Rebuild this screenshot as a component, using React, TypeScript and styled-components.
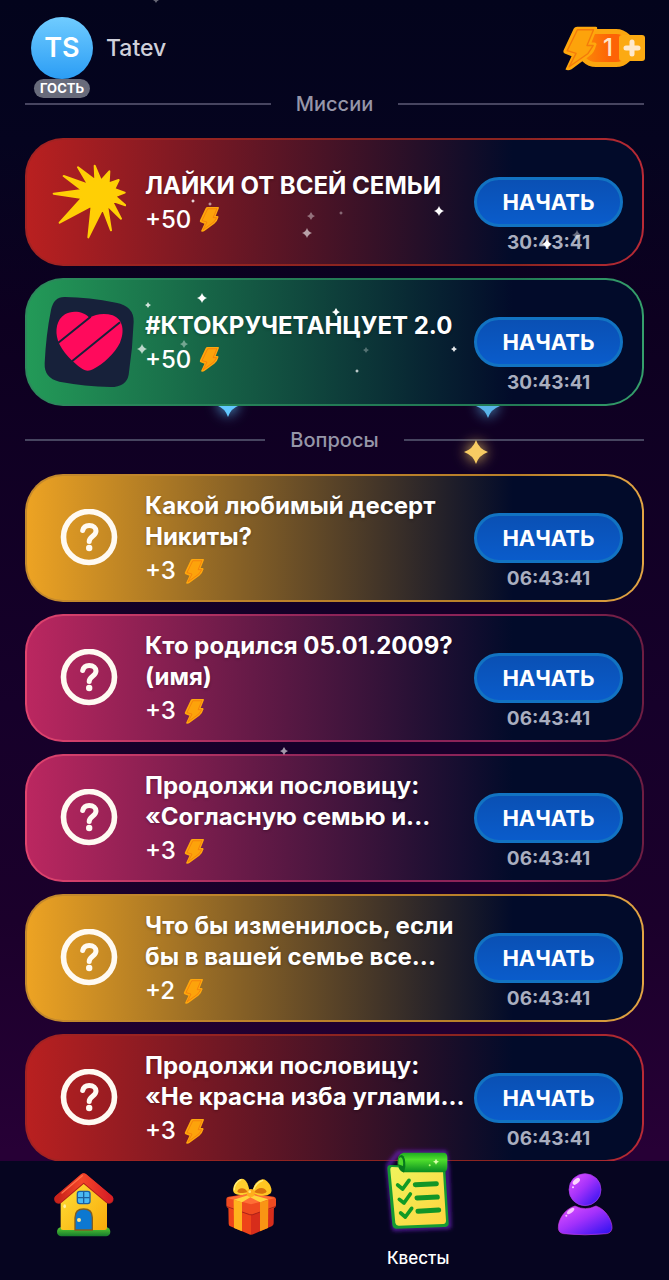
import React, { useId } from "react";
import styled, { createGlobalStyle } from "styled-components";

const GlobalStyle = createGlobalStyle`
  *, *::before, *::after { box-sizing: border-box; }
  body {
    margin: 0;
    background: #05051c;
    font-family: Inter, "Noto Sans", sans-serif;
    color: #fff;
  }
`;

type Tone = "red" | "green" | "gold" | "pink";

const tones: Record<Tone, { fill: string; edge: string; edgeMid: string; corner: string }> = {
  red: { fill: "#b92020", edge: "#a32222", edgeMid: "#8c2420", corner: "#b92a36" },
  green: { fill: "#239a58", edge: "#2c8a5c", edgeMid: "#237a55", corner: "#35a06c" },
  gold: { fill: "#eda323", edge: "#c58a2c", edgeMid: "#b9802a", corner: "#e3a544" },
  pink: { fill: "#bb2760", edge: "#e0446e", edgeMid: "#8c2358", corner: "#6e1d42" },
};

const Page = styled.div`
  position: relative;
  display: flex;
  flex-direction: column;
  min-height: 100vh;
  overflow: clip;
  background: linear-gradient(180deg, #03041c 0%, #05041f 11%, #0d0020 25%, #16002a 55%, #1b002b 72%, #270036 90%);
`;

const Header = styled.header`
  position: relative;
  z-index: 2;
  display: flex;
  align-items: flex-start;
  justify-content: space-between;
  height: 70px;
  padding: 17px 24px 0 31px;
`;

const Profile = styled.a`
  display: flex;
  align-items: center;
  gap: 13px;
  color: #cfd0da;
  font-size: 23px;
  line-height: 30px;
  font-weight: 500;
  text-decoration: none;
`;

const Avatar = styled.span`
  position: relative;
  display: flex;
  align-items: center;
  justify-content: center;
  width: 62px;
  height: 62px;
  border-radius: 50%;
  background: linear-gradient(180deg, #70ccff, #2b9df5);
  color: #fff;
  font-size: 27px;
  font-weight: 600;
`;

const Badge = styled.span`
  position: absolute;
  top: 62px;
  left: 50%;
  transform: translateX(-50%);
  padding: 0 6px;
  border-radius: 10px;
  background: #686b7b;
  font-size: 13px;
  line-height: 19px;
  font-weight: 700;
`;

const Energy = styled.button`
  display: flex;
  align-items: center;
  height: 46px;
  margin-top: 8px;
  padding: 0;
  border: 0;
  background: none;
  color: #ffe6c8;
  font: 500 24px/28px Inter, sans-serif;
  cursor: pointer;
`;

const EnergyPill = styled.span`
  display: flex;
  align-items: center;
  justify-content: flex-end;
  width: 58px;
  height: 38px;
  margin: 0 -16px 0 -22px;
  padding-right: 17px;
  border: 5px solid #fba60f;
  border-radius: 19px;
  background: linear-gradient(90deg, #fb8a08, #fd6306 60%);
`;

const EnergyPart = styled.span`
  display: flex;
  z-index: 1;
`;

const List = styled.main`
  display: flex;
  flex-direction: column;
  padding: 0 25px;
`;

const Group = styled.section`
  display: flex;
  flex-direction: column;
  gap: 12px;
`;

const Divider = styled.h2`
  display: flex;
  align-items: center;
  gap: 25px;
  height: 68px;
  margin: 0 0 -12px;
  color: #9696a8;
  font-size: 20px;
  line-height: 26px;
  font-weight: 500;

  &::before,
  &::after {
    content: "";
    flex: 1;
    height: 2px;
    background: #474560;
  }
`;

const Card = styled.article<{ $tone: Tone }>`
  position: relative;
  display: flex;
  height: 128px;
  padding-right: 19px;
  border: 2px solid transparent;
  border-radius: 38px;
  background:
    linear-gradient(90deg, ${(p) => tones[p.$tone].fill}, #020b2a 79%) padding-box,
    linear-gradient(
      90deg,
      ${(p) => tones[p.$tone].edge},
      ${(p) => tones[p.$tone].edgeMid} 50%,
      ${(p) => tones[p.$tone].edgeMid} 80%,
      ${(p) => tones[p.$tone].corner}
    ) border-box;
`;

const IconCell = styled.div`
  display: flex;
  flex: none;
  align-items: center;
  justify-content: center;
  width: 118px;
  padding-left: 6px;
`;

const Info = styled.div`
  display: flex;
  flex: 1;
  flex-direction: column;
  justify-content: center;
  min-width: 0;
  padding-top: 4px;
`;

const Title = styled.h3`
  margin: 0;
  font-size: 24px;
  line-height: 31px;
  font-weight: 700;
  white-space: pre;
  text-shadow: 0 1px 3px rgba(0, 0, 0, 0.3);
`;

const Reward = styled.p`
  display: flex;
  align-items: center;
  gap: 8px;
  height: 38px;
  margin: 0;
  font-size: 24px;
  line-height: 38px;
  font-weight: 500;
`;

const Action = styled.div`
  display: flex;
  flex: none;
  flex-direction: column;
  align-items: center;
  justify-content: flex-end;
  width: 149px;
  padding-bottom: 10px;
`;

const StartButton = styled.button`
  width: 100%;
  height: 50px;
  padding: 0;
  border: 3px solid #1273c2;
  border-radius: 25px;
  background: linear-gradient(180deg, #0a50b4, #0a5ccb);
  color: #fff;
  font: 700 22px/28px Inter, "Noto Sans", sans-serif;
  cursor: pointer;
`;

const Timer = styled.time`
  height: 27px;
  color: #a9aebf;
  font-size: 19px;
  line-height: 31px;
  font-weight: 700;
`;

const Sparks = styled.svg`
  position: absolute;
  inset: 0;
  width: 100%;
  height: 100%;
  pointer-events: none;
`;

const Nav = styled.nav`
  position: sticky;
  bottom: 0;
  z-index: 3;
  display: flex;
  height: 119px;
  margin-top: -1px;
  background: #060520;
`;

const NavItem = styled.a`
  display: flex;
  flex: 1;
  flex-direction: column;
  align-items: center;
  padding-top: 11px;
  color: #fff;
  font-size: 17px;
  line-height: 26px;
  font-weight: 500;
  text-decoration: none;
`;

const NavIcon = styled.span<{ $raised?: boolean }>`
  display: flex;
  align-items: flex-start;
  height: ${(p) => (p.$raised ? 100 : 73)}px;
  margin-top: ${(p) => (p.$raised ? -27 : 0)}px;
`;

function Bolt({ size }: { size: number }) {
  return (
    <svg width={size} height={size * 1.25} viewBox="0 0 108 135" aria-hidden="true">
      <path
        d="M44 5H98Q105 5 102 12L86 51H96Q104 54 99 61Q94 82 79 91L28 129Q18 135 10 130L28 91L8 83Q2 80 5 73L34 11Q37 5 44 5Z"
        fill="#ffa70c"
      />
      <path d="M45 14H92L73 60H91L76 83L21 122L41 83L15 75Z" fill="#fda30b" stroke="#f47a0b" strokeWidth="4" strokeLinejoin="round" />
    </svg>
  );
}

function PlusTile() {
  return (
    <svg width="26" height="26" viewBox="0 0 26 26" aria-hidden="true">
      <rect width="26" height="26" rx="3" fill="#fcaa12" />
      <path d="M13 7V19M7 13H19" stroke="#ffe9cc" strokeWidth="5" strokeLinecap="round" />
    </svg>
  );
}

function QuestionIcon() {
  return (
    <svg width="58" height="58" viewBox="0 0 58 58" fill="none" stroke="#fffaf2" aria-hidden="true">
      <circle cx="29" cy="28" r="25.500" strokeWidth="5.600" />
      <path d="M22.700 21.500C23.500 18 26 16.500 29.200 16.500C33.500 16.500 36 18.800 36 22C36 27 29.200 27.500 29.200 32.500" strokeWidth="5" strokeLinecap="round" />
      <circle cx="29.200" cy="39" r="3.200" fill="#fffaf2" stroke="none" />
    </svg>
  );
}

function BurstIcon() {
  return (
    <svg width="74" height="76" viewBox="153 102 222 228" aria-hidden="true">
      <path
        d="M281 107L300 152L325 124L323 160L353 150L340 177L371 188L342 199L373 226L332 212L360 266L318 225L330 301L305 236L262 322L272 227L176 278L243 204L158 191L243 180L188 138L262 164L231 112L283 151Z"
        fill="#ffcf05"
        stroke="#ffcf05"
        strokeWidth="6"
        strokeLinejoin="round"
      />
    </svg>
  );
}

function HeartIcon() {
  return (
    <svg width="90" height="92" viewBox="132 498 270 276" aria-hidden="true">
      <path d="M195 501Q266 502 348 518Q402 528 401 575Q398 655 386 734Q379 771 332 771Q255 769 178 755Q132 745 134 700Q138 614 153 540Q161 500 195 501Z" fill="#17213a" />
      <g transform="translate(90 465)">
        <path d="M178 98C160 78 125 76 105 88C80 103 74 137 84 167C95 200 130 232 154 250C165 259 178 259 189 253C220 236 254 206 270 173C284 141 281 104 248 91C222 83 196 88 178 98Z" fill="#ff0a5c" />
        <path d="M84 174L182 95M126 229L270 112" stroke="#17213a" strokeWidth="6" fill="none" />
      </g>
    </svg>
  );
}

function HouseIcon() {
  const id = useId();
  return (
    <svg width="64" height="66" viewBox="156 96 192 198" aria-hidden="true">
      <defs>
        <linearGradient id={id + "w"} x1="0" x2="1" y1="0" y2="1">
          <stop offset="0" stopColor="#ffe238" />
          <stop offset="1" stopColor="#f9a90b" />
        </linearGradient>
        <linearGradient id={id + "r"} x1="0" x2="1">
          <stop offset="0" stopColor="#c9221a" />
          <stop offset=".45" stopColor="#f5472a" />
          <stop offset="1" stopColor="#d71f25" />
        </linearGradient>
        <linearGradient id={id + "g"} x1="0" x2="0" y1="0" y2="1">
          <stop offset="0" stopColor="#56c934" />
          <stop offset="1" stopColor="#147a2c" />
        </linearGradient>
      </defs>
      <rect x="171" y="262" width="160" height="27" rx="13" fill={`url(#${id}g)`} />
      <path d="M182 175L251 120L321 175V263Q321 270 314 270H189Q182 270 182 263Z" fill={`url(#${id}w)`} />
      <path d="M176 178L251 114L327 178" fill="none" stroke="#b01f1a" strokeWidth="27" strokeLinecap="round" strokeLinejoin="round" />
      <path d="M176 176L251 112L327 176" fill="none" stroke={`url(#${id}r)`} strokeWidth="24" strokeLinecap="round" strokeLinejoin="round" />
      <path d="M186 159L247 107" stroke="#ff7048" strokeWidth="4" strokeLinecap="round" />
      <rect x="232" y="154" width="38" height="37" rx="7" fill="#49b9f3" stroke="#1c5f9f" strokeWidth="4" />
      <path d="M251 155V190M233 173H269" stroke="#1c5f9f" strokeWidth="4" />
      <path d="M225 270V233Q225 207 251 207Q277 207 277 233V270Z" fill="#0c78d1" stroke="#805d22" strokeWidth="4" />
      <circle cx="237" cy="240" r="6" fill="#ffe58a" />
      <ellipse cx="194" cy="199" rx="4" ry="6" fill="#fff2a0" />
    </svg>
  );
}

function GiftIcon() {
  return (
    <svg width="64" height="66" viewBox="656 96 192 198" aria-hidden="true">
      <path d="M684 196L752 218V284Q748 284 743 281L690 259Q685 257 685 251Z" fill="#ee4319" />
      <path d="M821 196L752 218V284Q757 284 762 281L814 259Q820 256 820 250Z" fill="#d72d1b" />
      <path d="M752 160L820 170Q828 172 827 180V196Q826 203 820 205L760 223Q752 225 745 223L685 205Q678 203 678 196V177Q678 171 685 170Z" fill="#ef4a20" />
      <path d="M752 160L824 174L752 193L681 174Z" fill="#ff6d35" />
      <path d="M680 200L748 224Q752 225 757 224L825 200" fill="none" stroke="#a92118" strokeWidth="3" />
      <path d="M700 179L725 187V274L701 264Z" fill="#ffb21d" />
      <path d="M804 179L779 187V274L803 264Z" fill="#f99514" />
      <path d="M700 179L752 163L804 178L780 187L750 172L725 187Z" fill="#ffd43b" />
      <path d="M748 158C732 166 708 169 700 157C693 144 708 118 724 116C739 116 746 138 748 158Z" fill="#ffcf2e" />
      <path d="M742 156C728 161 713 160 711 155C711 147 730 137 742 156Z" fill="#d9730c" />
      <path d="M755 158C771 168 798 172 811 160C820 147 803 119 788 118C770 119 758 139 755 158Z" fill="#ffc622" />
      <path d="M761 156C776 163 792 163 799 155C796 144 776 137 761 156Z" fill="#d9730c" />
      <path d="M722 119C708 125 702 138 702 149M787 121C772 127 764 138 761 147" fill="none" stroke="#fff07c" strokeWidth="4" strokeLinecap="round" />
      <circle cx="751" cy="159" r="12" fill="#ffad1c" />
      <circle cx="748" cy="155" r="4" fill="#ffe574" />
    </svg>
  );
}

function QuestsIcon() {
  const id = useId();
  return (
    <svg width="80" height="90" viewBox="129 15 240 270" aria-hidden="true">
      <defs>
        <linearGradient id={id + "p"} x1="0" x2="1" y1="0" y2="1">
          <stop offset="0" stopColor="#eff35c" />
          <stop offset="1" stopColor="#ffd43f" />
        </linearGradient>
        <linearGradient id={id + "c"} x1="0" x2="0" y1="0" y2="1">
          <stop offset="0" stopColor="#1daa21" />
          <stop offset=".35" stopColor="#4fdf2c" />
          <stop offset="1" stopColor="#078a21" />
        </linearGradient>
        <filter id={id + "b"} x="-20%" y="-20%" width="140%" height="140%">
          <feGaussianBlur stdDeviation="7" />
        </filter>
      </defs>
      <path d="M160 76L190 38H330L336 85L342 260L178 266Z" fill="none" stroke="#6c20c0" strokeWidth="10" filter={`url(#${id}b)`} />
      <path d="M166 75L322 80Q330 80 331 90L341 249Q342 260 331 261L185 266Q174 266 172 255L157 85Q157 76 166 75Z" fill="#159b32" />
      <path d="M171 81L318 88Q324 88 324 95L333 242Q333 251 325 252L191 257Q183 257 181 249L166 91Q165 82 171 81Z" fill={`url(#${id}p)`} />
      <path d="M205 38H325Q337 38 337 52V82Q337 97 323 97H210Q192 98 188 73Q186 43 205 38Z" fill={`url(#${id}c)`} />
      <path d="M189 75Q187 43 201 45Q212 50 211 80L207 98Q194 93 189 75Z" fill="#07791d" />
      <path d="M190 73Q189 51 198 52Q206 56 204 78Z" fill="#4ed92b" />
      <path d="M303 56L306 62L312 65L306 68L303 74L300 68L294 65L300 62Z" fill="#d8ffac" />
      <circle cx="284" cy="76" r="3" fill="#b8ff72" />
      <path d="M188 135L203 147L222 121M193 178L207 189L226 162M197 219L211 231L230 205" fill="none" stroke="#119b25" strokeWidth="11" strokeLinecap="round" strokeLinejoin="round" />
      <path d="M241 134L304 131M246 174L307 171M249 214L311 210" fill="none" stroke="#129527" strokeWidth="15" strokeLinecap="round" />
    </svg>
  );
}

function PersonIcon() {
  const id = useId();
  return (
    <svg width="64" height="66" viewBox="654 96 192 198" aria-hidden="true">
      <defs>
        <linearGradient id={id} x1="0" x2="1" y1="0" y2="1">
          <stop offset="0" stopColor="#e655ff" />
          <stop offset=".45" stopColor="#a331fb" />
          <stop offset="1" stopColor="#2410f0" />
        </linearGradient>
      </defs>
      <path d="M720 198Q751 214 783 198C815 209 832 244 831 265Q829 279 814 281Q750 288 686 281Q671 279 670 265C669 239 689 207 720 198Z" fill={`url(#${id})`} stroke="#c03dd8" strokeWidth="2" />
      <circle cx="750" cy="149" r="51" fill="#060520" />
      <circle cx="750" cy="149" r="48" fill={`url(#${id})`} stroke="#a93ce8" strokeWidth="2" />
      <ellipse cx="724" cy="124" rx="13" ry="7" transform="rotate(-42 724 124)" fill="#fbd5ff" />
      <circle cx="714" cy="142" r="3" fill="#fbd5ff" />
      <ellipse cx="707" cy="213" rx="13" ry="6" transform="rotate(-38 707 213)" fill="#f8c7ff" />
      <circle cx="694" cy="227" r="3" fill="#f8c7ff" />
    </svg>
  );
}

type Spark = { x: number; y: number; r: number; o: number; color?: string };

const glowing: Spark[] = [
  { x: 228, y: 405, r: 12, o: 1, color: "#62c8ff" },
  { x: 488, y: 406, r: 12, o: 0.9, color: "#62c8ff" },
  { x: 476, y: 452, r: 12, o: 1, color: "#f7cb63" },
];

const twinkles: Spark[] = [
  { x: 156, y: 0, r: 3, o: 0.4 },
  { x: 193, y: 201, r: 2, o: 0.9 },
  { x: 210, y: 204, r: 2, o: 0.6 },
  { x: 311, y: 216, r: 4, o: 0.4 },
  { x: 307, y: 233, r: 5, o: 0.6 },
  { x: 341, y: 213, r: 2, o: 0.4 },
  { x: 439, y: 211, r: 5, o: 1 },
  { x: 547, y: 244, r: 5, o: 1 },
  { x: 577, y: 235, r: 5, o: 0.4 },
  { x: 202, y: 298, r: 5, o: 1 },
  { x: 148, y: 305, r: 3, o: 0.8 },
  { x: 142, y: 349, r: 5, o: 0.7 },
  { x: 184, y: 344, r: 4, o: 0.4 },
  { x: 336, y: 312, r: 4, o: 1 },
  { x: 366, y: 350, r: 3, o: 0.3 },
  { x: 357, y: 371, r: 2, o: 0.8 },
  { x: 454, y: 349, r: 3, o: 0.9 },
  { x: 284, y: 751, r: 4, o: 0.6 },
];

function SparkField({ items, glow }: { items: Spark[]; glow?: boolean }) {
  return (
    <Sparks aria-hidden="true">
      {items.map((s) => (
        <path
          key={s.x + "-" + s.y}
          d="M0 -12Q3 -3 12 0Q3 3 0 12Q-3 3 -12 0Q-3 -3 0 -12Z"
          transform={`translate(${s.x} ${s.y}) scale(${s.r / 12})`}
          fill={s.color || "#fff"}
          opacity={s.o}
          style={glow ? { filter: `drop-shadow(0 0 7px ${s.color})` } : undefined}
        />
      ))}
    </Sparks>
  );
}

type Quest = { tone: Tone; title: string; reward: string; time: string; icon?: React.ReactNode };

const missions: Quest[] = [
  { tone: "red", title: "ЛАЙКИ ОТ ВСЕЙ СЕМЬИ", reward: "+50", time: "30:43:41", icon: <BurstIcon /> },
  { tone: "green", title: "#КТОКРУЧЕТАНЦУЕТ 2.0", reward: "+50", time: "30:43:41", icon: <HeartIcon /> },
];

const questions: Quest[] = [
  { tone: "gold", title: "Какой любимый десерт\nНикиты?", reward: "+3", time: "06:43:41" },
  { tone: "pink", title: "Кто родился 05.01.2009?\n(имя)", reward: "+3", time: "06:43:41" },
  { tone: "pink", title: "Продолжи пословицу:\n«Согласную семью и...", reward: "+3", time: "06:43:41" },
  { tone: "gold", title: "Что бы изменилось, если\nбы в вашей семье все...", reward: "+2", time: "06:43:41" },
  { tone: "red", title: "Продолжи пословицу:\n«Не красна изба углами...", reward: "+3", time: "06:43:41" },
];

function QuestCard({ quest }: { quest: Quest }) {
  return (
    <Card $tone={quest.tone}>
      <IconCell>{quest.icon || <QuestionIcon />}</IconCell>
      <Info>
        <Title>{quest.title}</Title>
        <Reward>
          {quest.reward}
          <Bolt size={21} />
        </Reward>
      </Info>
      <Action>
        <StartButton type="button">НАЧАТЬ</StartButton>
        <Timer>{quest.time}</Timer>
      </Action>
    </Card>
  );
}

function QuestGroup({ name, quests }: { name: string; quests: Quest[] }) {
  return (
    <Group>
      <Divider>{name}</Divider>
      {quests.map((q, i) => (
        <QuestCard key={i} quest={q} />
      ))}
    </Group>
  );
}

export default function App() {
  return (
    <Page>
      <GlobalStyle />
      <SparkField items={glowing} glow />
      <Header>
        <Profile href="#profile">
          <Avatar>
            TS
            <Badge>ГОСТЬ</Badge>
          </Avatar>
          Tatev
        </Profile>
        <Energy type="button">
          <EnergyPart>
            <Bolt size={37} />
          </EnergyPart>
          <EnergyPill>1</EnergyPill>
          <EnergyPart>
            <PlusTile />
          </EnergyPart>
        </Energy>
      </Header>
      <List>
        <QuestGroup name="Миссии" quests={missions} />
        <QuestGroup name="Вопросы" quests={questions} />
      </List>
      <SparkField items={twinkles} />
      <Nav>
        <NavItem href="#home" aria-label="Главная">
          <NavIcon>
            <HouseIcon />
          </NavIcon>
        </NavItem>
        <NavItem href="#gifts" aria-label="Подарки">
          <NavIcon>
            <GiftIcon />
          </NavIcon>
        </NavItem>
        <NavItem href="#quests" aria-current="page">
          <NavIcon $raised>
            <QuestsIcon />
          </NavIcon>
          Квесты
        </NavItem>
        <NavItem href="#me" aria-label="Профиль">
          <NavIcon>
            <PersonIcon />
          </NavIcon>
        </NavItem>
      </Nav>
    </Page>
  );
}
